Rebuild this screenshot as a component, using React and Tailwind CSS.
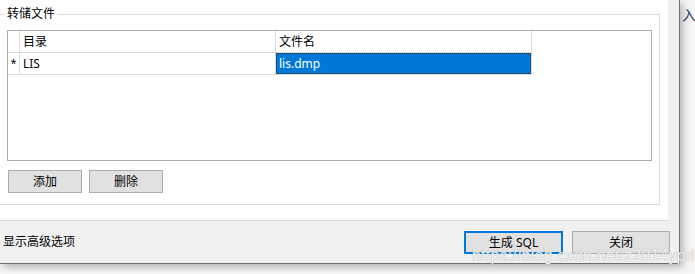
import React from 'react';

const ui = { fontFamily: '"Noto Sans", "Noto Sans CJK SC", sans-serif' };

const WinButton = ({ children, primary, width }) => (
    <button
        className={
            (primary
                ? 'h-[23px] bg-[#e1e1e1] border-2 border-[#0078d7] text-[12px] text-black leading-none '
                : 'h-[23px] bg-[#e1e1e1] border border-[#adadad] text-[12px] text-black leading-none ') + width
        }
        style={ui}
    >
        {children}
    </button>
);

export default function App() {
    return (
        <div className="relative w-[695px] h-[274px] overflow-hidden bg-[#f6f6f6]" style={ui}>
            {/* dialog window */}
            <div className="w-[680px] h-[264px] bg-[#f0f0f0] border-r border-b border-[#6e6e6e] shadow-[3px_3px_8px_rgba(0,0,0,0.28)] flex flex-col">
                <div className="w-[668px] h-[221px] bg-white border-b border-[#dadada] shrink-0">
                    <div className="relative ml-[-2px] mt-[14px] w-[662px] h-[191px] border border-[#dcdcdc]">
                        <span className="absolute left-[6px] top-[-9px] bg-white pl-[2px] pr-[2px] text-[12px] leading-[16px] text-black">
                            转储文件
                        </span>

                        {/* data grid */}
                        <div className="ml-[8px] mt-[15px] w-[645px] h-[131px] border border-[#ababab] bg-white">
                            <div className="flex h-[22px] text-[12px] text-black">
                                <div className="w-[12px] border-r border-b border-[#dadada]" />
                                <div className="w-[256px] border-r border-b border-[#dadada] pl-[3px] flex items-center">目录</div>
                                <div className="w-[256px] border-r border-b border-[#dadada] pl-[3px] flex items-center">文件名</div>
                            </div>
                            <div className="flex h-[22px] text-[12px] text-black">
                                <div className="w-[12px] border-r border-b border-[#dadada] flex items-center justify-center text-[11px]">*</div>
                                <div className="w-[256px] border-r border-b border-[#dadada] pl-[3px] flex items-center">LIS</div>
                                <div className="w-[256px] border-r border-b border-[#dadada] flex items-stretch">
                                    <div className="flex-1 bg-[#0078d7] border border-dotted border-[#3a2a10] text-white pl-[2px] flex items-center">
                                        lis.dmp
                                    </div>
                                </div>
                            </div>
                        </div>

                        <div className="flex gap-[7px] ml-[9px] mt-[9px]">
                            <WinButton width="w-[74px]">添加</WinButton>
                            <WinButton width="w-[74px]">删除</WinButton>
                        </div>
                    </div>
                </div>

                <div className="flex items-center h-[42px]">
                    <span className="ml-[3px] text-[12px] text-black">显示高级选项</span>
                    <div className="ml-auto flex gap-[9px] mr-[9px] mt-[1px]">
                        <WinButton primary width="w-[99px]">生成 SQL</WinButton>
                        <WinButton width="w-[98px]">关闭</WinButton>
                    </div>
                </div>
            </div>

            {/* text behind the dialog, at its right edge */}
            <span className="absolute left-[682px] top-[4px] text-[14px] text-[#1f3a5a]">入</span>

            {/* csdn watermark */}
            <span
                className="absolute left-[472px] top-[244px] text-[16px] tracking-[0.2px] text-white/90 [text-shadow:0_0_1px_rgba(110,110,110,0.8)]"
                style={{ fontFamily: '"Liberation Sans", Arial, sans-serif' }}
            >
                https://blog.csdn.net/z2014ypd
            </span>
        </div>
    );
}
